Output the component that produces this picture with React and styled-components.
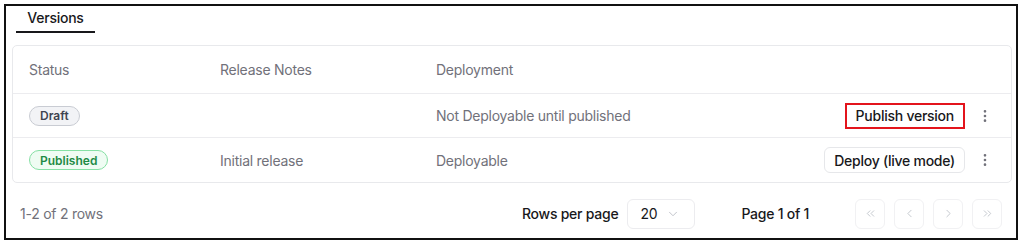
import styled, { createGlobalStyle } from "styled-components";
import {
  EllipsisVertical,
  ChevronDown,
  ChevronLeft,
  ChevronRight,
  ChevronsLeft,
  ChevronsRight,
} from "lucide-react";

const GlobalStyle = createGlobalStyle`
  body {
    margin: 0;
    background: #ffffff;
    font-family: Inter, "Liberation Sans", sans-serif;
    letter-spacing: -0.25px;
    -webkit-font-smoothing: antialiased;
  }
  * { box-sizing: border-box; }
`;

const versions = [
  {
    status: "Draft",
    notes: "",
    deployment: "Not Deployable until published",
    action: "Publish version",
    highlight: true,
  },
  {
    status: "Published",
    notes: "Initial release",
    deployment: "Deployable",
    action: "Deploy (live mode)",
    highlight: false,
  },
];

export default function App() {
  return (
    <>
      <GlobalStyle />
      <Frame>
        <Tabs>
          <Tab>Versions</Tab>
        </Tabs>
        <Card>
          <HeaderRow>
            <HeadCell>Status</HeadCell>
            <HeadCell>Release Notes</HeadCell>
            <HeadCell>Deployment</HeadCell>
            <HeadCell />
            <HeadCell />
          </HeaderRow>
          {versions.map((v, i) => (
            <Row key={v.status} $last={i === versions.length - 1}>
              <Cell>
                <Badge $kind={v.status}>{v.status}</Badge>
              </Cell>
              <Cell>{v.notes}</Cell>
              <Cell>{v.deployment}</Cell>
              <ActionCell>
                <ActionButton $highlight={v.highlight}>{v.action}</ActionButton>
              </ActionCell>
              <MenuCell>
                <MenuButton>
                  <EllipsisVertical size={16} strokeWidth={2} />
                </MenuButton>
              </MenuCell>
            </Row>
          ))}
        </Card>
        <Footer>
          <Muted>1-2 of 2 rows</Muted>
          <Controls>
            <RowsPer>
              <Label>Rows per page</Label>
              <Select>
                <span>20</span>
                <ChevronDown size={14} strokeWidth={1.5} color="#b8bcc4" />
              </Select>
            </RowsPer>
            <Label>Page 1 of 1</Label>
            <Pager>
              <PageButton><ChevronsLeft size={13} strokeWidth={1.5} /></PageButton>
              <PageButton><ChevronLeft size={13} strokeWidth={1.5} /></PageButton>
              <PageButton><ChevronRight size={13} strokeWidth={1.5} /></PageButton>
              <PageButton><ChevronsRight size={13} strokeWidth={1.5} /></PageButton>
            </Pager>
          </Controls>
        </Footer>
      </Frame>
    </>
  );
}

const Frame = styled.div`
  margin: 4px 7px 4px 4px;
  height: 236px;
  border: 2px solid #111;
  padding: 0 4px 0 6px;
  display: flex;
  flex-direction: column;
  background: #fff;
`;

const Tabs = styled.div`
  display: flex;
  padding-left: 4px;
`;

const Tab = styled.div`
  width: 79px;
  padding: 2px 0 3px;
  line-height: 20px;
  font-size: 14px;
  font-weight: 500;
  color: #18181b;
  text-align: center;
  border-bottom: 2px solid #18181b;
`;

const Card = styled.div`
  margin-top: 12px;
  border: 1px solid #e8e9ec;
  border-radius: 5px;
  overflow: hidden;
`;

const grid = `
  display: grid;
  grid-template-columns: 191px 216px 1fr auto 46px;
  align-items: center;
`;

const HeaderRow = styled.div`
  ${grid}
  height: 48px;
  border-bottom: 1px solid #ececef;
`;

const Row = styled.div`
  ${grid}
  height: 44px;
  border-bottom: ${(p) => (p.$last ? "none" : "1px solid #ececef")};
`;

const HeadCell = styled.div`
  padding-left: 16px;
  font-size: 14px;
  color: #71717a;
`;

const Cell = styled.div`
  padding-left: 16px;
  font-size: 14px;
  color: #71717a;
  white-space: nowrap;
`;

const Badge = styled.span`
  display: inline-flex;
  align-items: center;
  height: 20px;
  padding: 0 10px;
  border-radius: 999px;
  font-size: 12px;
  font-weight: 600;
  letter-spacing: 0;
  border: 1px solid
    ${(p) => (p.$kind === "Published" ? "#86e0a4" : "#c9ccd3")};
  background: ${(p) => (p.$kind === "Published" ? "#effcf3" : "#f2f3f6")};
  color: ${(p) => (p.$kind === "Published" ? "#1f8a45" : "#3f4450")};
`;

const ActionCell = styled.div`
  display: flex;
  justify-content: flex-end;
`;

const ActionButton = styled.button`
  height: 26px;
  padding: 0 9px;
  font-family: inherit;
  letter-spacing: inherit;
  font-size: 14px;
  font-weight: 500;
  color: #18181b;
  background: #fff;
  border: ${(p) => (p.$highlight ? "2px solid #e3141c" : "1px solid #e6e7ea")};
  border-radius: ${(p) => (p.$highlight ? "0" : "6px")};
  cursor: pointer;
`;

const MenuCell = styled.div`
  display: flex;
  justify-content: flex-start;
  padding-left: 12px;
`;

const MenuButton = styled.button`
  display: flex;
  align-items: center;
  justify-content: center;
  width: 16px;
  height: 24px;
  padding: 0;
  border: none;
  background: none;
  color: #71717a;
`;

const Footer = styled.div`
  flex: 1;
  display: flex;
  align-items: center;
  justify-content: space-between;
  padding: 6px 10px 0 8px;
`;

const Muted = styled.span`
  font-size: 14px;
  color: #71717a;
`;

const Controls = styled.div`
  display: flex;
  align-items: center;
  gap: 46px;
`;

const RowsPer = styled.div`
  display: flex;
  align-items: center;
  gap: 9px;
`;

const Label = styled.span`
  font-size: 14px;
  font-weight: 500;
  color: #18181b;
`;

const Select = styled.div`
  width: 68px;
  height: 30px;
  display: flex;
  align-items: center;
  justify-content: space-between;
  padding: 0 14px 0 12px;
  border: 1px solid #ececef;
  border-radius: 6px;
  font-size: 14px;
  color: #18181b;
`;

const Pager = styled.div`
  display: flex;
  gap: 9px;
`;

const PageButton = styled.button`
  width: 30px;
  height: 30px;
  display: flex;
  align-items: center;
  justify-content: center;
  padding: 0;
  border: 1px solid #f1f1f3;
  border-radius: 6px;
  background: #fff;
  color: #b8bcc4;
`;
